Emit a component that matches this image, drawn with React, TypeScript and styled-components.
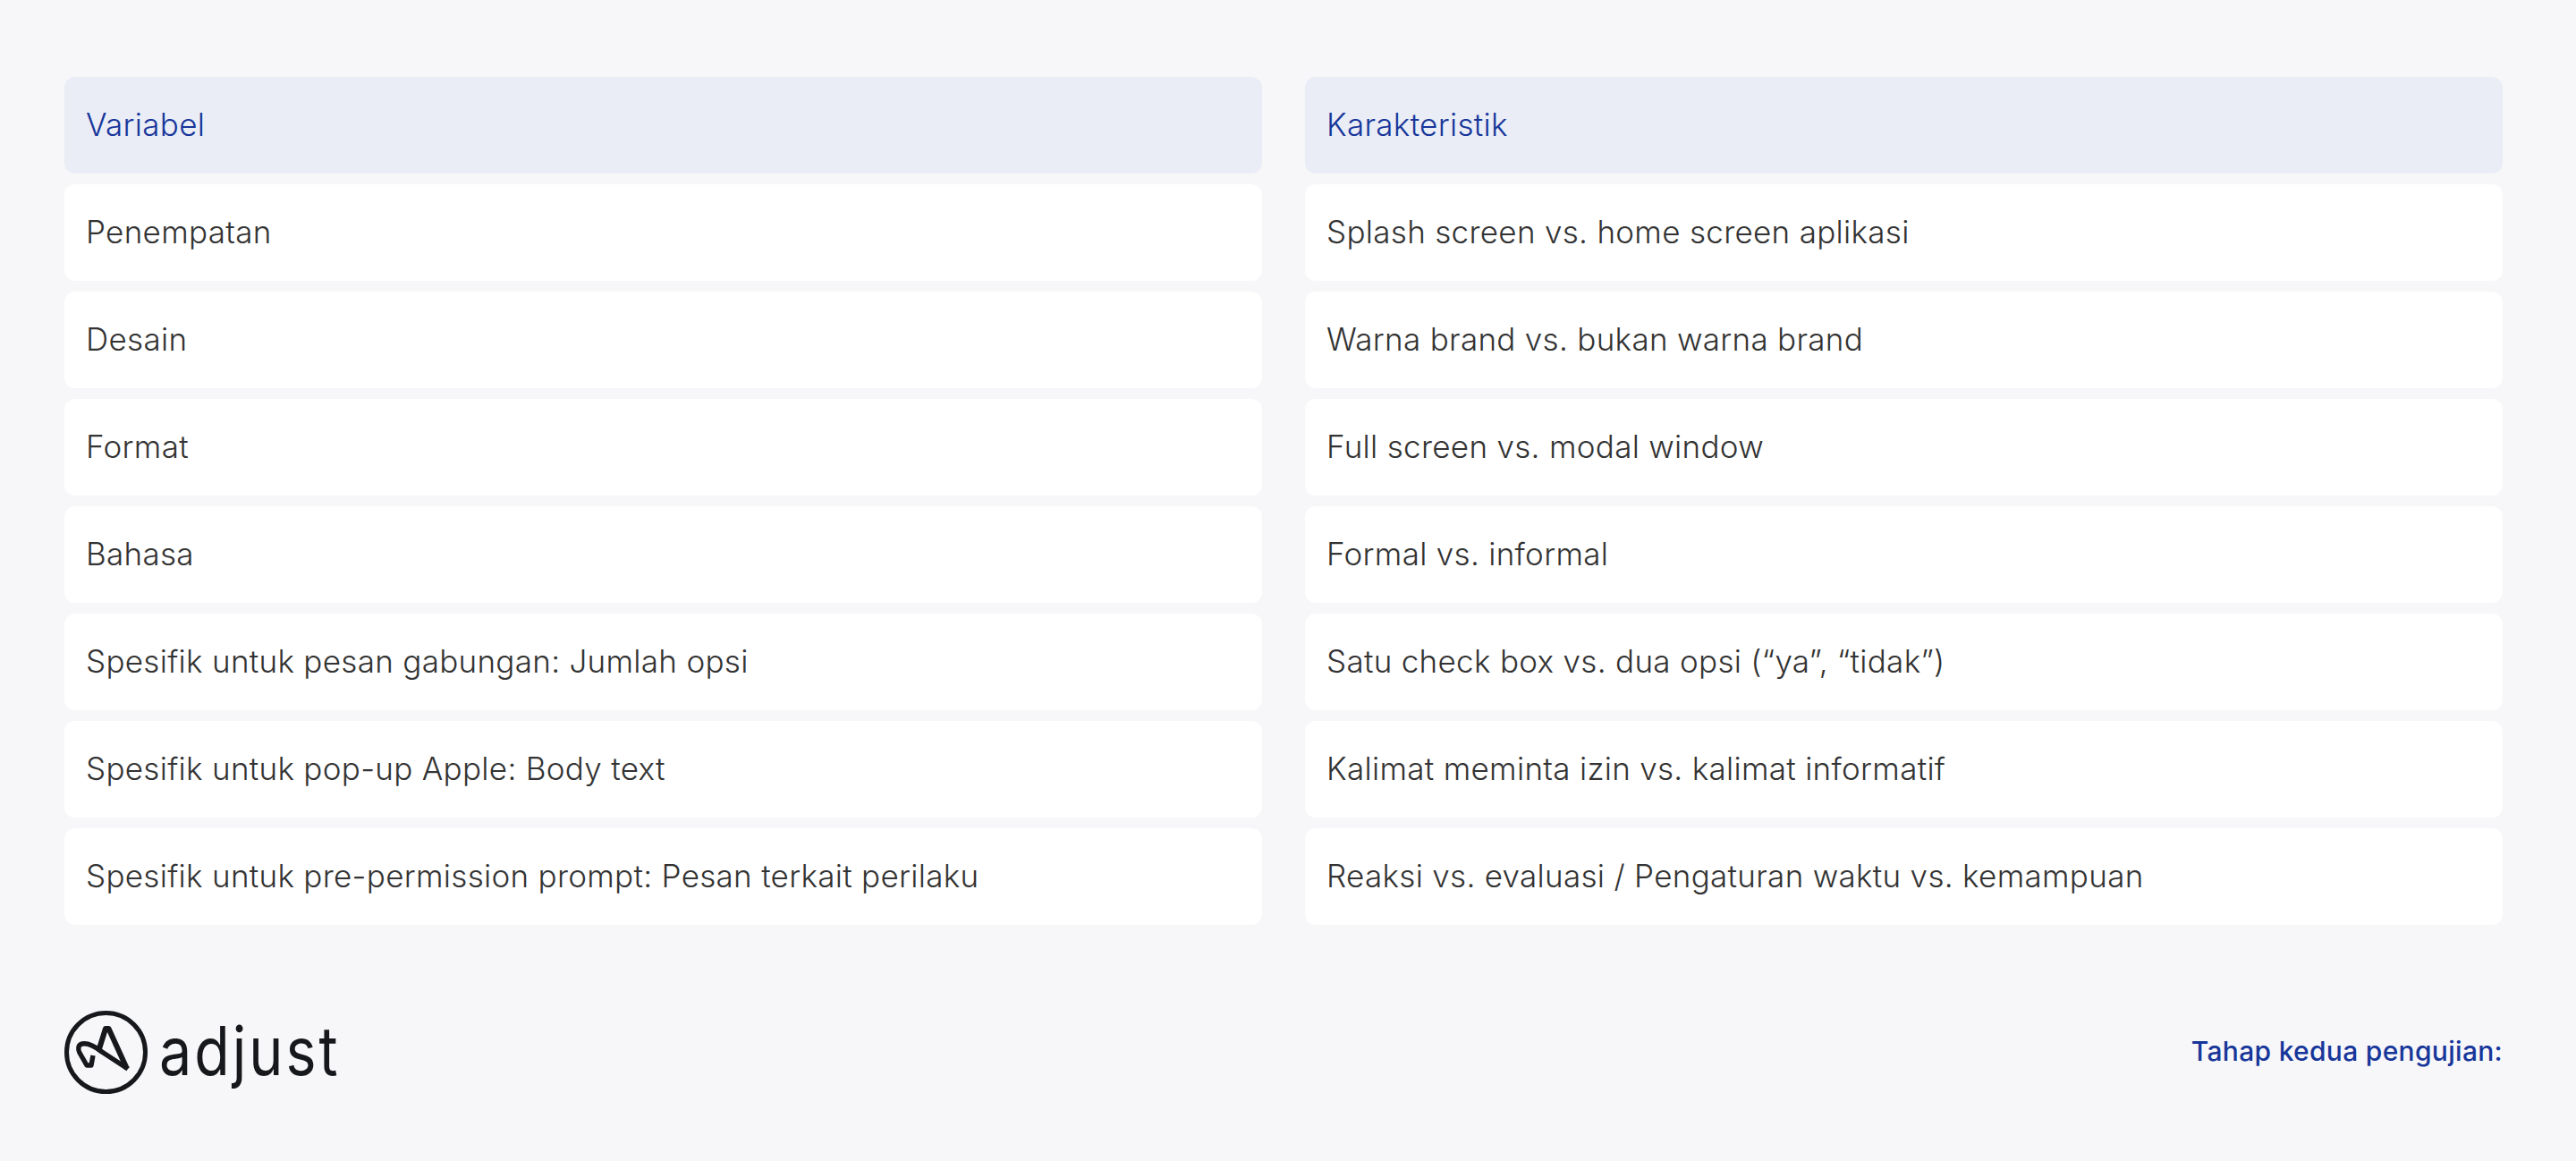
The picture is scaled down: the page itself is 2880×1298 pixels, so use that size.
import React from "react"
import styled, { createGlobalStyle } from "styled-components"

const ROWS: [string, string][] = [
  ["Variabel", "Karakteristik"],
  ["Penempatan", "Splash screen vs. home screen aplikasi"],
  ["Desain", "Warna brand vs. bukan warna brand"],
  ["Format", "Full screen vs. modal window"],
  ["Bahasa", "Formal vs. informal"],
  ["Spesifik untuk pesan gabungan: Jumlah opsi", "Satu check box vs. dua opsi (“ya”, “tidak”)"],
  ["Spesifik untuk pop-up Apple: Body text", "Kalimat meminta izin vs. kalimat informatif"],
  ["Spesifik untuk pre-permission prompt: Pesan terkait perilaku", "Reaksi vs. evaluasi / Pengaturan waktu vs. kemampuan"],
]

const App = () => (
  <>
    <GlobalStyle />
    <Page>
      <Table>
        {ROWS.flat().map((text, i) => (
          <Cell key={i} $head={i < 2}>
            {text}
          </Cell>
        ))}
      </Table>
      <Footer>
        <Logo>
          <svg width="93" height="93" viewBox="0 0 93 93" fill="none">
            <circle cx="46.5" cy="46.5" r="44" stroke="#16181c" strokeWidth="5" />
            <path
              d="M70 65 L49.5 20 L46 20 L38.5 44"
              stroke="#16181c"
              strokeWidth="6"
              strokeLinejoin="round"
            />
            <path
              d="M71 65 L42 46 C33 39 25 36 20 37 C15 38 15 43 17 47 L25 61 L30 61 L32 50"
              stroke="#16181c"
              strokeWidth="5.4"
              strokeLinejoin="round"
            />
          </svg>
          <Wordmark>adjust</Wordmark>
        </Logo>
        <Caption>Tahap kedua pengujian:</Caption>
      </Footer>
    </Page>
  </>
)

export default App

const GlobalStyle = createGlobalStyle`
  html, body {
    margin: 0;
    padding: 0;
    background: #f7f7f9;
  }
`

const Page = styled.div`
  width: 2880px;
  height: 1298px;
  box-sizing: border-box;
  padding: 86px 82px 0 72px;
  font-family: "Inter", "Noto Sans", sans-serif;
`

const Table = styled.div`
  display: grid;
  grid-template-columns: 1339px 1339px;
  grid-auto-rows: 108px;
  column-gap: 48px;
  row-gap: 12px;
`

const Cell = styled.div<{ $head: boolean }>`
  display: flex;
  align-items: center;
  box-sizing: border-box;
  padding: 0 0 3px 24px;
  border-radius: 12px;
  font-size: 35px;
  font-weight: 300;
  letter-spacing: 0.3px;
  background: ${(p) => (p.$head ? "#eaedf6" : "#ffffff")};
  color: ${(p) => (p.$head ? "#17369a" : "#333333")};
`

const Footer = styled.div`
  display: flex;
  justify-content: space-between;
  align-items: center;
  margin-top: 96px;
`

const Logo = styled.div`
  display: flex;
  align-items: center;
  gap: 13px;
`

const Wordmark = styled.span`
  display: inline-block;
  padding-bottom: 4px;
  font-size: 75px;
  font-weight: 400;
  letter-spacing: 3.5px;
  line-height: 1;
  color: #16181c;
  transform-origin: left center;
  transform: scaleX(0.86);
`

const Caption = styled.div`
  padding-bottom: 3px;
  font-size: 30px;
  font-weight: 500;
  letter-spacing: 0.3px;
  color: #17369a;
`
